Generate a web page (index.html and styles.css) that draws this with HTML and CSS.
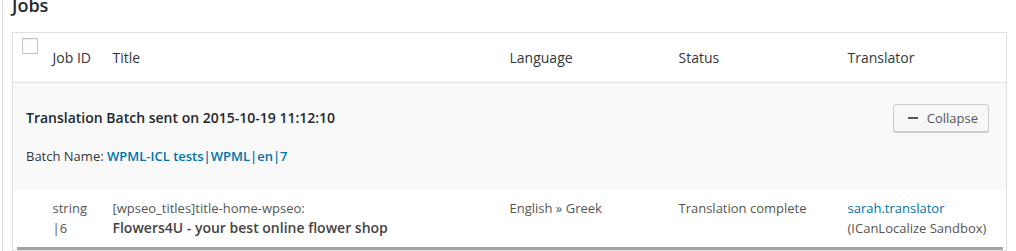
FILE: index.html
```html
<!DOCTYPE html>
<html lang="en">

<head>
    <meta charset="UTF-8">
    <title>Jobs</title>
    <link rel="stylesheet" href="styles.css">
</head>

<body>
    <div class="wrap">
        <h2 class="page-title">Jobs</h2>

        <table class="jobs">
            <colgroup>
                <col class="col-cb">
                <col class="col-id">
                <col class="col-title">
                <col class="col-lang">
                <col class="col-status">
                <col class="col-translator">
            </colgroup>
            <thead>
                <tr>
                    <th class="check-column"><span class="checkbox"></span></th>
                    <th>Job ID</th>
                    <th>Title</th>
                    <th>Language</th>
                    <th>Status</th>
                    <th>Translator</th>
                </tr>
            </thead>
            <tbody>
                <tr class="batch">
                    <td colspan="6">
                        <div class="batch-head">
                            <strong class="batch-title">Translation Batch sent on 2015-10-19 11:12:10</strong>
                            <button class="button" type="button"><span class="dash"></span>Collapse</button>
                        </div>
                        <p class="batch-name">Batch Name: <a href="#">WPML-ICL tests|WPML|en|7</a></p>
                    </td>
                </tr>
                <tr class="job">
                    <td></td>
                    <td>string |6</td>
                    <td>[wpseo_titles]title-home-wpseo:<br><strong class="job-title">Flowers4U - your best online flower shop</strong></td>
                    <td>English » Greek</td>
                    <td>Translation complete</td>
                    <td><a href="#">sarah.translator</a><br>(ICanLocalize Sandbox)</td>
                </tr>
                <tr class="next">
                    <td colspan="6"><div class="next-bar"></div></td>
                </tr>
            </tbody>
        </table>
    </div>
</body>

</html>
```

FILE: styles.css
```css
body {
    margin: 0;
    background-color: #fff;
    color: #444;
    font-family: "Open Sans", "Liberation Sans", sans-serif;
    font-size: 13px;
    overflow: hidden;
}

.wrap {
    margin-left: 2px;
    border-left: 1px solid #ddd;
    padding-left: 9px;
    min-height: 251px;
}

.page-title {
    margin: -7px 0 15px;
    font-size: 18px;
    line-height: 24px;
    font-weight: 600;
    color: #23282d;
}

a {
    color: #0073aa;
    text-decoration: none;
}

.jobs {
    width: 994px;
    table-layout: fixed;
    border-collapse: collapse;
    border-spacing: 0;
    border: 1px solid #e1e1e1;
}

.col-cb {
    width: 30px;
}

.col-id {
    width: 60px;
}

.col-title {
    width: 397px;
}

.col-lang,
.col-status,
.col-translator {
    width: 169px;
}

th {
    padding: 15px 10px 14px;
    font-size: 14px;
    line-height: 20px;
    font-weight: 400;
    text-align: left;
    color: #32373c;
    border-bottom: 1px solid #e1e1e1;
}

th.check-column {
    vertical-align: top;
    padding: 5px 0 0 9px;
}

.checkbox {
    display: block;
    width: 14px;
    height: 14px;
    border: 1px solid #c4c4c4;
    background-color: #fff;
    box-shadow: inset 0 1px 2px rgba(0, 0, 0, 0.07);
}

.batch td {
    padding: 21px 17px 24px 13px;
    background-color: #f9f9f9;
}

.batch-head {
    display: flex;
    justify-content: space-between;
    align-items: center;
}

.batch-title {
    font-size: 14px;
    line-height: 20px;
    font-weight: 600;
    color: #23282d;
}

.button {
    display: flex;
    align-items: center;
    height: 28px;
    padding: 0 10px 0 14px;
    border: 1px solid #ccc;
    border-radius: 3px;
    background-color: #f7f7f7;
    box-shadow: 0 1px 0 #ccc;
    color: #555;
    font-family: inherit;
    font-size: 13px;
    cursor: pointer;
}

.dash {
    width: 10px;
    height: 2px;
    margin-right: 9px;
    background-color: #555;
}

.batch-name {
    margin: 14px 0 0;
    line-height: 20px;
    color: #32373c;
}

.batch-name a {
    font-weight: 600;
}

.job td {
    padding: 8px 10px 9px;
    line-height: 20px;
    vertical-align: top;
    color: #555;
}

.job-title {
    font-size: 14px;
    font-weight: 600;
    color: #444;
}

.next td {
    padding: 0;
}

.next-bar {
    height: 3px;
    margin: 0 3px 0 4px;
    background-color: #a0a5aa;
}
```
